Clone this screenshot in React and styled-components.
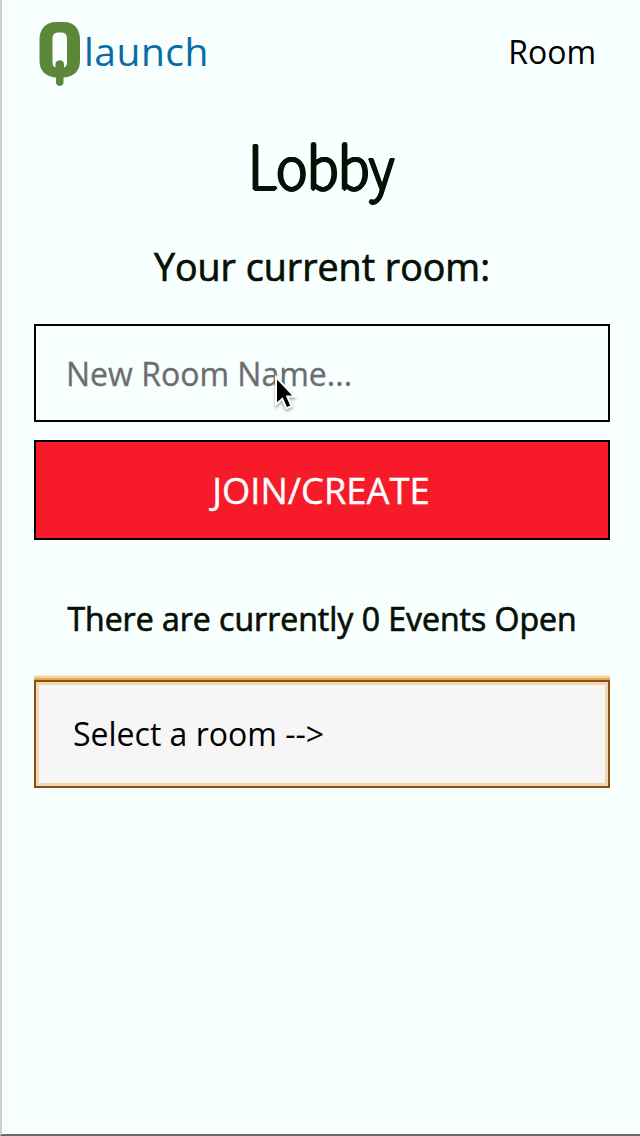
import React from 'react';
import styled, { createGlobalStyle } from 'styled-components';

const GlobalStyle = createGlobalStyle`
  * { box-sizing: border-box; }
  html, body { margin: 0; padding: 0; }
  body {
    background: #f8ffff;
    color: #000;
    font-family: 'Open Sans', 'Noto Sans', sans-serif;
    overflow: hidden;
  }
`;

const Page = styled.div`
  width: 640px;
  height: 1136px;
  display: flex;
  flex-direction: column;
  background: #f8ffff;
  border-left: 2px solid #cfcfd1;
  border-bottom: 2px solid #666a6a;
`;

const Header = styled.header`
  height: 104px;
  display: flex;
  justify-content: space-between;
  align-items: center;
  padding: 0 44px 0 36px;
`;

const Brand = styled.div`
  display: flex;
  align-items: center;
  height: 104px;
`;

const BrandMark = styled.svg`
  width: 44px;
  height: 68px;
  margin-top: 4px;
`;

const BrandName = styled.span`
  margin: 0 0 2px 2px;
  font-size: 39px;
  line-height: 52px;
  color: #0b6ca5;
  letter-spacing: 0.5px;
`;

const NavLink = styled.a`
  font-size: 32px;
  line-height: 44px;
  color: #000;
`;

const Main = styled.main`
  display: flex;
  flex-direction: column;
  padding: 0 30px 0 32px;
`;

const Title = styled.h1`
  margin: 11px 0 9px;
  padding-right: 2px;
  height: 96px;
  line-height: 96px;
  text-align: center;
  font-family: 'Noto Sans CJK JP', sans-serif;
  font-size: 57px;
  font-weight: 100;
  color: #061004;
  -webkit-text-stroke: 2.2px #061004;
  text-shadow: 2px 0 #061004, -2px 0 #061004, 0 1.5px #061004, 0 -1.5px #061004,
    1px 1px #061004, -1px 1px #061004, 1px -1px #061004, -1px -1px #061004;
  transform: scaleX(0.92);
  &::first-letter { font-size: 60px; }
`;

const Message = styled.p`
  margin: ${({ $top }) => $top}px 0 0;
  height: 60px;
  line-height: 60px;
  text-align: center;
  white-space: nowrap;
  font-size: ${({ $size }) => $size}px;
  font-weight: 400;
  color: #061004;
  -webkit-text-stroke: 0.7px #061004;
`;

const RoomInput = styled.input`
  width: 100%;
  height: 98px;
  margin: 27px 0 0;
  padding: 0 30px;
  border: 2px solid #000;
  border-radius: 0;
  background: #f8ffff;
  font: 400 32px 'Open Sans', sans-serif;
  outline: none;
  &::placeholder { color: #6d6d6d; opacity: 1; -webkit-text-stroke: 0.3px #6d6d6d; }
`;

const JoinButton = styled.button`
  width: 100%;
  height: 100px;
  margin: 18px 0 0;
  padding: 0 2px 0 0;
  border: 2px solid #000;
  border-radius: 0;
  background: #f71b2a;
  color: #fff;
  font: 400 36.3px 'Open Sans', sans-serif;
  -webkit-text-stroke: 0.4px #fff;
`;

const RoomSelect = styled.div`
  height: 108px;
  margin-top: 31px;
  padding: 0 37px 2px;
  display: flex;
  align-items: center;
  border: 2px solid #875014;
  background: #f7f6f7;
  box-shadow: inset 0 0 0 3px #f2d7b2, 0 -2px 0 #e0aa55, 0 -4px 0 #f7d69d, 0 -5px 0 #fbebcf;
  font-size: 32px;
  color: #000;
`;

const Pointer = styled.svg`
  position: absolute;
  left: 270px;
  top: 370px;
  width: 36px;
  height: 50px;
  pointer-events: none;
  filter: drop-shadow(0 2px 1.5px rgba(0, 0, 0, 0.35));
`;

export default function App() {
  return (
    <>
      <GlobalStyle />
      <Page>
        <Header>
          <Brand>
            <BrandMark viewBox="38 20 44 68" aria-label="Q">
              <path
                fill="#5b873a"
                fillRule="evenodd"
                d="M56 22H64C74 22 80 29 80 39V61C80 71 74 76.500 63.500 77.500V82.500C63.500 87 56 87 56 82.500V77.500C46 76.500 39.500 71 39.500 61V39C39.500 29 46 22 56 22ZM52.500 39V62C52.500 65 53.500 67 55.500 67.500V64C55.500 59 64 59 64 64V67.500C66 67 67 65 67 62V39C67 34.500 65 32.500 61 32.500H58.500C54.500 32.500 52.500 34.500 52.500 39Z"
              />
            </BrandMark>
            <BrandName>launch</BrandName>
          </Brand>
          <NavLink>Room</NavLink>
        </Header>
        <Main>
          <Title>Lobby</Title>
          <Message $top={17} $size={37.6}>Your current room:</Message>
          <RoomInput placeholder="New Room Name..." />
          <JoinButton>JOIN/CREATE</JoinButton>
          <Message $top={49} $size={32}>There are currently 0 Events Open</Message>
          <RoomSelect>Select a room --&gt;</RoomSelect>
        </Main>
      </Page>
      <Pointer viewBox="270 370 36 50">
        <path
          d="M276 377V404.500L282.300 398.800L286.500 408.300L291.500 406L287.300 396.500H294.500Z"
          fill="#000"
          stroke="#fff"
          strokeWidth="2"
        />
      </Pointer>
    </>
  );
}
